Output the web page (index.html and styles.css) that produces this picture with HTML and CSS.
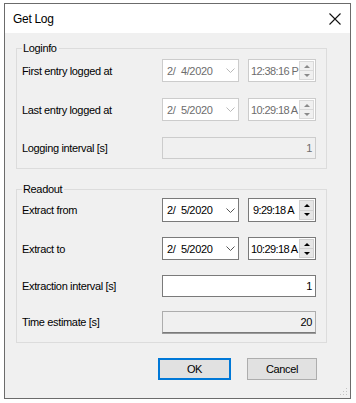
FILE: index.html
```html
<!DOCTYPE html>
<html>
<head>
<meta charset="utf-8">
<link rel="stylesheet" href="styles.css">
</head>
<body>
<div class="window">
  <div class="titlebar">
    <span class="title">Get Log</span>
    <svg class="close" width="12" height="12" viewBox="0 0 12 12"><path d="M0.5 0.5 L11.5 11.5 M11.5 0.5 L0.5 11.5" stroke="#111" stroke-width="1.1" fill="none"/></svg>
  </div>
  <div class="client">
    <div class="group g1">
      <span class="legend">Loginfo</span>
      <div class="row r23">
        <span class="label">First entry logged at</span>
        <div class="date dis"><span class="dtext">2/&nbsp; 4/2020</span><svg class="chev" width="9" height="5" viewBox="0 0 9 5"><polyline points="0.5,0.5 4.5,4.5 8.5,0.5" fill="none" stroke="#b9b9b9" stroke-width="1"/></svg></div>
        <div class="time dis"><span class="ttext">12:38:16 P</span><div class="spin"><span class="up"></span><span class="down"></span></div></div>
      </div>
      <div class="row r23 gap16">
        <span class="label">Last entry logged at</span>
        <div class="date dis"><span class="dtext">2/&nbsp; 5/2020</span><svg class="chev" width="9" height="5" viewBox="0 0 9 5"><polyline points="0.5,0.5 4.5,4.5 8.5,0.5" fill="none" stroke="#b9b9b9" stroke-width="1"/></svg></div>
        <div class="time dis"><span class="ttext">10:29:18 A</span><div class="spin"><span class="up"></span><span class="down"></span></div></div>
      </div>
      <div class="row r22 gap16">
        <span class="label">Logging interval [s]</span>
        <div class="field ro-dis">1</div>
      </div>
    </div>

    <div class="group g2">
      <span class="legend">Readout</span>
      <div class="row r24">
        <span class="label">Extract from</span>
        <div class="date en"><span class="dtext">2/&nbsp; 5/2020</span><svg class="chev" width="9" height="5" viewBox="0 0 9 5"><polyline points="0.5,0.5 4.5,4.5 8.5,0.5" fill="none" stroke="#555" stroke-width="1"/></svg></div>
        <div class="time en"><span class="ttext pad">9:29:18 A</span><div class="spin"><span class="up"></span><span class="down"></span></div></div>
      </div>
      <div class="row r23 gap15">
        <span class="label">Extract to</span>
        <div class="date en"><span class="dtext">2/&nbsp; 5/2020</span><svg class="chev" width="9" height="5" viewBox="0 0 9 5"><polyline points="0.5,0.5 4.5,4.5 8.5,0.5" fill="none" stroke="#555" stroke-width="1"/></svg></div>
        <div class="time en"><span class="ttext">10:29:18 A</span><div class="spin"><span class="up"></span><span class="down"></span></div></div>
      </div>
      <div class="row r22 gap15">
        <span class="label">Extraction interval [s]</span>
        <div class="field edit">1</div>
      </div>
      <div class="row r22 gap14">
        <span class="label">Time estimate [s]</span>
        <div class="field ro">20</div>
      </div>
    </div>

    <div class="buttons">
      <div class="btn default">OK</div>
      <div class="btn">Cancel</div>
    </div>
    <svg class="grip" width="8" height="8" viewBox="0 0 8 8">
      <rect x="6" y="0" width="1" height="1" fill="#c4c4c4"/>
      <rect x="3" y="3" width="1" height="1" fill="#c4c4c4"/>
      <rect x="6" y="3" width="1" height="1" fill="#c4c4c4"/>
      <rect x="0" y="6" width="1" height="1" fill="#c4c4c4"/>
      <rect x="3" y="6" width="1" height="1" fill="#c4c4c4"/>
      <rect x="6" y="6" width="1" height="1" fill="#c4c4c4"/>
    </svg>
  </div>
</div>
</body>
</html>
```

FILE: styles.css
```css
html, body {
  margin: 0;
  padding: 0;
  background: #ffffff;
}
body {
  font-family: "Liberation Sans", Arial, sans-serif;
  font-size: 11px;
  letter-spacing: -0.35px;
  color: #000;
}
.window {
  margin: 3px 0 0 4px;
  width: 347px;
  height: 396px;
  box-sizing: border-box;
  border: 1px solid #6b6b6b;
  display: flex;
  flex-direction: column;
  background: #f0f0f0;
}
.titlebar {
  height: 29px;
  background: #ffffff;
  display: flex;
  align-items: center;
  justify-content: space-between;
  padding: 0 9px 0 8px;
  flex: none;
}
.title {
  font-size: 12px;
  letter-spacing: -0.3px;
}
.close {
  margin-top: 1px;
}
.client {
  flex: 1;
  position: relative;
  padding: 15px 0 0 11px;
}
.group {
  position: relative;
  width: 311px;
  box-sizing: border-box;
  border: 1px solid #dcdcdc;
  padding: 10px 9px 9px 5px;
}
.g2 {
  margin-top: 20px;
  padding-top: 8px;
}
.legend {
  position: absolute;
  left: 5px;
  top: -8px;
  padding: 0 2px 0 1px;
  background: #f0f0f0;
  line-height: 14px;
}
.row {
  display: flex;
  align-items: center;
}
.r22 { height: 22px; }
.r23 { height: 23px; }
.r24 { height: 24px; }
.gap14 { margin-top: 14px; }
.gap15 { margin-top: 15px; }
.gap16 { margin-top: 16px; }
.label {
  width: 140px;
  flex: none;
}
.date {
  width: 77px;
  height: 100%;
  box-sizing: border-box;
  background: #fff;
  display: flex;
  align-items: center;
  justify-content: space-between;
  padding: 0 3px 0 4px;
  flex: none;
}
.time {
  margin-left: 9px;
  width: 68px;
  height: 100%;
  box-sizing: border-box;
  background: #fff;
  display: flex;
  align-items: stretch;
  padding: 1px;
  flex: none;
}
.dis {
  border: 1px solid #cccccc;
  color: #6d6d6d;
}
.en {
  border: 1px solid #7a7a7a;
  color: #000;
}
.ttext {
  flex: 1;
  overflow: hidden;
  white-space: nowrap;
  display: flex;
  align-items: center;
  padding-left: 1px;
  letter-spacing: -0.6px;
}
.ttext.pad {
  padding-left: 3px;
}
.spin {
  width: 15px;
  flex: none;
  display: flex;
  flex-direction: column;
}
.spin span {
  flex: 1;
  display: flex;
  align-items: center;
  justify-content: center;
  background: #e6e6e6;
  border: 1px solid #d0d0d0;
}
.spin .down {
  border-top: none;
}
.spin .up::before {
  content: "";
  border-left: 3px solid transparent;
  border-right: 3px solid transparent;
  border-bottom: 3px solid #000;
}
.spin .down::before {
  content: "";
  border-left: 3px solid transparent;
  border-right: 3px solid transparent;
  border-top: 3px solid #000;
}
.dis .spin span {
  background: #f0f0f0;
  border-color: #d9d9d9;
}
.dis .spin .up::before { border-bottom-color: #8a8a8a; }
.dis .spin .down::before { border-top-color: #8a8a8a; }
.field {
  width: 154px;
  height: 100%;
  box-sizing: border-box;
  display: flex;
  align-items: center;
  justify-content: flex-end;
  padding-right: 3px;
  flex: none;
}
.ro-dis {
  border: 1px solid #cccccc;
  background: #f0f0f0;
  color: #6d6d6d;
}
.edit {
  border: 1px solid #7a7a7a;
  background: #fff;
}
.ro {
  border: 1px solid #adadad;
  border-bottom-color: #7a7a7a;
  box-shadow: 0 1px 0 #9a9a9a;
  background: #f0f0f0;
}
.buttons {
  display: flex;
  justify-content: flex-end;
  gap: 16px;
  margin-top: 15px;
  width: 301px;
}
.btn {
  width: 70px;
  height: 22px;
  box-sizing: border-box;
  border: 1px solid #adadad;
  background: #e1e1e1;
  display: flex;
  align-items: center;
  justify-content: center;
}
.btn.default {
  width: 73px;
  border: 1px solid #0078d7;
  box-shadow: inset 0 0 0 1px #0078d7;
}
.grip {
  position: absolute;
  right: 2px;
  bottom: 2px;
}
```
